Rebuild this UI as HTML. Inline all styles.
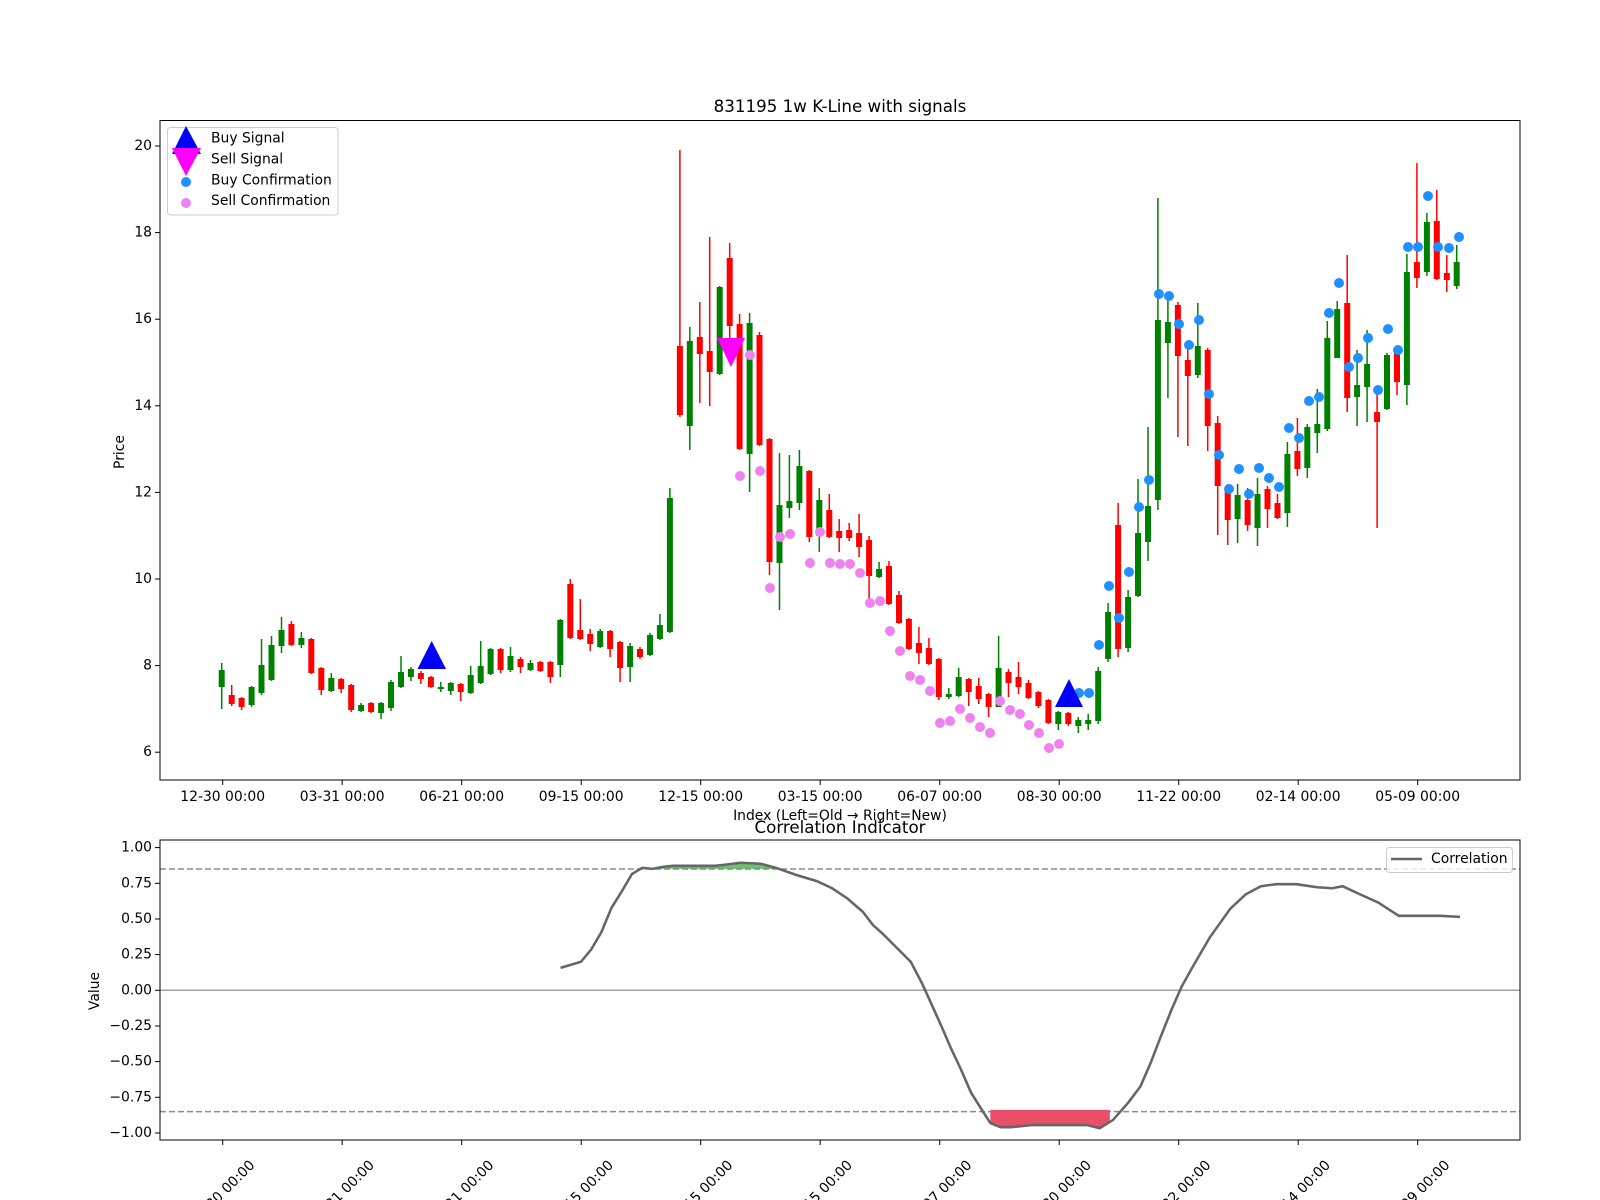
<!DOCTYPE html>
<html><head><meta charset="utf-8"><style>
html,body{margin:0;padding:0;background:#fff;}
svg{display:block;font-family:"DejaVu Sans","Liberation Sans",sans-serif;}
.g{fill:#008000;} .r{fill:#ff0000;}
.gw{stroke:#008000;stroke-width:1.5;} .rw{stroke:#ff0000;stroke-width:1.5;}
.bd{fill:#1e90ff;} .vd{fill:#ee82ee;}
text{fill:#000;font-size:13.9px;}
</style></head><body>
<svg width="1600" height="1200" viewBox="0 0 1600 1200" xmlns="http://www.w3.org/2000/svg">
<rect width="1600" height="1200" fill="#fff"/>
<text x="840" y="112" text-anchor="middle" style="font-size:16.7px">831195 1w K-Line with signals</text>

<!-- top axes ticks -->
<g stroke="#000" stroke-width="1">
<line x1="155" x2="160" y1="146" y2="146"/><line x1="155" x2="160" y1="232.6" y2="232.6"/><line x1="155" x2="160" y1="319.2" y2="319.2"/><line x1="155" x2="160" y1="405.8" y2="405.8"/><line x1="155" x2="160" y1="492.4" y2="492.4"/><line x1="155" x2="160" y1="579" y2="579"/><line x1="155" x2="160" y1="665.6" y2="665.6"/><line x1="155" x2="160" y1="752.2" y2="752.2"/>
<line x1="222.7" x2="222.7" y1="780" y2="785"/><line x1="342.2" x2="342.2" y1="780" y2="785"/><line x1="461.7" x2="461.7" y1="780" y2="785"/><line x1="581.2" x2="581.2" y1="780" y2="785"/><line x1="700.7" x2="700.7" y1="780" y2="785"/><line x1="820.2" x2="820.2" y1="780" y2="785"/><line x1="939.7" x2="939.7" y1="780" y2="785"/><line x1="1059.2" x2="1059.2" y1="780" y2="785"/><line x1="1178.7" x2="1178.7" y1="780" y2="785"/><line x1="1298.2" x2="1298.2" y1="780" y2="785"/><line x1="1417.7" x2="1417.7" y1="780" y2="785"/>
</g>
<g text-anchor="end" dominant-baseline="central">
<text x="152" y="146">20</text><text x="152" y="232.6">18</text><text x="152" y="319.2">16</text><text x="152" y="405.8">14</text><text x="152" y="492.4">12</text><text x="152" y="579">10</text><text x="152" y="665.6">8</text><text x="152" y="752.2">6</text>
</g>
<g text-anchor="middle">
<text x="222.7" y="801">12-30 00:00</text><text x="342.2" y="801">03-31 00:00</text><text x="461.7" y="801">06-21 00:00</text><text x="581.2" y="801">09-15 00:00</text><text x="700.7" y="801">12-15 00:00</text><text x="820.2" y="801">03-15 00:00</text><text x="939.7" y="801">06-07 00:00</text><text x="1059.2" y="801">08-30 00:00</text><text x="1178.7" y="801">11-22 00:00</text><text x="1298.2" y="801">02-14 00:00</text><text x="1417.7" y="801">05-09 00:00</text>
</g>
<text x="840" y="820" text-anchor="middle">Index (Left=Old → Right=New)</text>
<text transform="translate(124,452) rotate(-90)" text-anchor="middle">Price</text>

<!-- candles -->
<g>
<line class="gw" x1="221.7" x2="221.7" y1="663" y2="709"/><rect class="g" x="218.7" y="670" width="6" height="17"/>
<line class="rw" x1="231.7" x2="231.7" y1="685" y2="706"/><rect class="r" x="228.7" y="695" width="6" height="9"/>
<line class="rw" x1="241.6" x2="241.6" y1="697" y2="710"/><rect class="r" x="238.6" y="698" width="6" height="9"/>
<line class="gw" x1="251.6" x2="251.6" y1="686" y2="707"/><rect class="g" x="248.6" y="687" width="6" height="18"/>
<line class="gw" x1="261.5" x2="261.5" y1="639" y2="695"/><rect class="g" x="258.5" y="665" width="6" height="28"/>
<line class="gw" x1="271.5" x2="271.5" y1="636" y2="681"/><rect class="g" x="268.5" y="645" width="6" height="35"/>
<line class="gw" x1="281.5" x2="281.5" y1="617" y2="653"/><rect class="g" x="278.5" y="630" width="6" height="16"/>
<line class="rw" x1="291.4" x2="291.4" y1="621" y2="646"/><rect class="r" x="288.4" y="624" width="6" height="21"/>
<line class="gw" x1="301.4" x2="301.4" y1="632" y2="648"/><rect class="g" x="298.4" y="638" width="6" height="7"/>
<line class="rw" x1="311.3" x2="311.3" y1="638" y2="674"/><rect class="r" x="308.3" y="639" width="6" height="34"/>
<line class="rw" x1="321.3" x2="321.3" y1="667" y2="695"/><rect class="r" x="318.3" y="668" width="6" height="22"/>
<line class="gw" x1="331.3" x2="331.3" y1="673" y2="692"/><rect class="g" x="328.3" y="678" width="6" height="13"/>
<line class="rw" x1="341.2" x2="341.2" y1="678" y2="693"/><rect class="r" x="338.2" y="679" width="6" height="10"/>
<line class="rw" x1="351.2" x2="351.2" y1="684" y2="712"/><rect class="r" x="348.2" y="685" width="6" height="25"/>
<line class="gw" x1="361.1" x2="361.1" y1="703" y2="712"/><rect class="g" x="358.1" y="705" width="6" height="6"/>
<line class="rw" x1="371.1" x2="371.1" y1="702" y2="713"/><rect class="r" x="368.1" y="703" width="6" height="9"/>
<line class="gw" x1="381.1" x2="381.1" y1="702" y2="719"/><rect class="g" x="378.1" y="703" width="6" height="10"/>
<line class="gw" x1="391" x2="391" y1="680" y2="711"/><rect class="g" x="388" y="682" width="6" height="26"/>
<line class="gw" x1="401" x2="401" y1="656" y2="688"/><rect class="g" x="398" y="672" width="6" height="15"/>
<line class="gw" x1="410.9" x2="410.9" y1="667" y2="681"/><rect class="g" x="407.9" y="669" width="6" height="8"/>
<line class="rw" x1="420.9" x2="420.9" y1="671" y2="684"/><rect class="r" x="417.9" y="673" width="6" height="6"/>
<line class="rw" x1="430.9" x2="430.9" y1="676" y2="688"/><rect class="r" x="427.9" y="677" width="6" height="10"/>
<line class="gw" x1="440.8" x2="440.8" y1="682" y2="692"/><rect class="g" x="437.8" y="687" width="6" height="2"/>
<line class="gw" x1="450.8" x2="450.8" y1="682" y2="695"/><rect class="g" x="447.8" y="683" width="6" height="8"/>
<line class="rw" x1="460.7" x2="460.7" y1="683" y2="701"/><rect class="r" x="457.7" y="684" width="6" height="8"/>
<line class="gw" x1="470.7" x2="470.7" y1="666" y2="694"/><rect class="g" x="467.7" y="675" width="6" height="18"/>
<line class="gw" x1="480.7" x2="480.7" y1="641" y2="684"/><rect class="g" x="477.7" y="666" width="6" height="17"/>
<line class="gw" x1="490.6" x2="490.6" y1="648" y2="675"/><rect class="g" x="487.6" y="649" width="6" height="25"/>
<line class="rw" x1="500.6" x2="500.6" y1="648" y2="673"/><rect class="r" x="497.6" y="649" width="6" height="21"/>
<line class="gw" x1="510.5" x2="510.5" y1="647" y2="672"/><rect class="g" x="507.5" y="656" width="6" height="14"/>
<line class="rw" x1="520.5" x2="520.5" y1="657" y2="673"/><rect class="r" x="517.5" y="659" width="6" height="8"/>
<line class="gw" x1="530.5" x2="530.5" y1="660" y2="671"/><rect class="g" x="527.5" y="663" width="6" height="7"/>
<line class="rw" x1="540.4" x2="540.4" y1="661" y2="672"/><rect class="r" x="537.4" y="662" width="6" height="9"/>
<line class="rw" x1="550.4" x2="550.4" y1="661" y2="683"/><rect class="r" x="547.4" y="662" width="6" height="15"/>
<line class="gw" x1="560.3" x2="560.3" y1="619" y2="677"/><rect class="g" x="557.3" y="620" width="6" height="45"/>
<line class="rw" x1="570.3" x2="570.3" y1="579" y2="639"/><rect class="r" x="567.3" y="584" width="6" height="54"/>
<line class="rw" x1="580.3" x2="580.3" y1="599" y2="640"/><rect class="r" x="577.3" y="630" width="6" height="9"/>
<line class="rw" x1="590.2" x2="590.2" y1="629" y2="651"/><rect class="r" x="587.2" y="634" width="6" height="10"/>
<line class="gw" x1="600.2" x2="600.2" y1="629" y2="648"/><rect class="g" x="597.2" y="631" width="6" height="16"/>
<line class="rw" x1="610.1" x2="610.1" y1="630" y2="657"/><rect class="r" x="607.1" y="631" width="6" height="18"/>
<line class="rw" x1="620.1" x2="620.1" y1="641" y2="682"/><rect class="r" x="617.1" y="642" width="6" height="26"/>
<line class="gw" x1="630.1" x2="630.1" y1="643" y2="682"/><rect class="g" x="627.1" y="646" width="6" height="21"/>
<line class="rw" x1="640" x2="640" y1="647" y2="659"/><rect class="r" x="637" y="649" width="6" height="8"/>
<line class="gw" x1="650" x2="650" y1="633" y2="656"/><rect class="g" x="647" y="635" width="6" height="20"/>
<line class="gw" x1="659.9" x2="659.9" y1="614" y2="640"/><rect class="g" x="656.9" y="625" width="6" height="14"/>
<line class="gw" x1="669.9" x2="669.9" y1="488" y2="633"/><rect class="g" x="666.9" y="498" width="6" height="134"/>
<line class="rw" x1="679.9" x2="679.9" y1="150" y2="417"/><rect class="r" x="676.9" y="346" width="6" height="69"/>
<line class="gw" x1="689.8" x2="689.8" y1="327" y2="450"/><rect class="g" x="686.8" y="341" width="6" height="85"/>
<line class="rw" x1="699.8" x2="699.8" y1="302" y2="403"/><rect class="r" x="696.8" y="337" width="6" height="17"/>
<line class="rw" x1="709.7" x2="709.7" y1="237" y2="406"/><rect class="r" x="706.7" y="351" width="6" height="21"/>
<line class="gw" x1="719.7" x2="719.7" y1="286" y2="375"/><rect class="g" x="716.7" y="287" width="6" height="87"/>
<line class="rw" x1="729.7" x2="729.7" y1="243" y2="338"/><rect class="r" x="726.7" y="258" width="6" height="68"/>
<line class="rw" x1="739.6" x2="739.6" y1="314" y2="450"/><rect class="r" x="736.6" y="324" width="6" height="125"/>
<line class="gw" x1="749.6" x2="749.6" y1="313" y2="492"/><rect class="g" x="746.6" y="323" width="6" height="131"/>
<line class="rw" x1="759.5" x2="759.5" y1="332" y2="446"/><rect class="r" x="756.5" y="335" width="6" height="110"/>
<line class="rw" x1="769.5" x2="769.5" y1="438" y2="575"/><rect class="r" x="766.5" y="439" width="6" height="123"/>
<line class="gw" x1="779.5" x2="779.5" y1="453" y2="610"/><rect class="g" x="776.5" y="505" width="6" height="58"/>
<line class="gw" x1="789.4" x2="789.4" y1="455" y2="518"/><rect class="g" x="786.4" y="501" width="6" height="7"/>
<line class="gw" x1="799.4" x2="799.4" y1="450" y2="510"/><rect class="g" x="796.4" y="466" width="6" height="37"/>
<line class="rw" x1="809.3" x2="809.3" y1="470" y2="542"/><rect class="r" x="806.3" y="471" width="6" height="66"/>
<line class="gw" x1="819.3" x2="819.3" y1="488" y2="552"/><rect class="g" x="816.3" y="500" width="6" height="36"/>
<line class="rw" x1="829.3" x2="829.3" y1="494" y2="538"/><rect class="r" x="826.3" y="510" width="6" height="27"/>
<line class="rw" x1="839.2" x2="839.2" y1="519" y2="552"/><rect class="r" x="836.2" y="531" width="6" height="7"/>
<line class="rw" x1="849.2" x2="849.2" y1="523" y2="541"/><rect class="r" x="846.2" y="530" width="6" height="8"/>
<line class="rw" x1="859.1" x2="859.1" y1="514" y2="557"/><rect class="r" x="856.1" y="533" width="6" height="14"/>
<line class="rw" x1="869.1" x2="869.1" y1="536" y2="600"/><rect class="r" x="866.1" y="540" width="6" height="36"/>
<line class="gw" x1="879.1" x2="879.1" y1="562" y2="578"/><rect class="g" x="876.1" y="569" width="6" height="8"/>
<line class="rw" x1="889" x2="889" y1="561" y2="605"/><rect class="r" x="886" y="566" width="6" height="38"/>
<line class="rw" x1="899" x2="899" y1="591" y2="624"/><rect class="r" x="896" y="595" width="6" height="28"/>
<line class="rw" x1="908.9" x2="908.9" y1="618" y2="650"/><rect class="r" x="905.9" y="619" width="6" height="30"/>
<line class="rw" x1="918.9" x2="918.9" y1="627" y2="664"/><rect class="r" x="915.9" y="643" width="6" height="10"/>
<line class="rw" x1="928.9" x2="928.9" y1="638" y2="665"/><rect class="r" x="925.9" y="648" width="6" height="16"/>
<line class="rw" x1="938.8" x2="938.8" y1="658" y2="700"/><rect class="r" x="935.8" y="659" width="6" height="38"/>
<line class="gw" x1="948.8" x2="948.8" y1="688" y2="699"/><rect class="g" x="945.8" y="694" width="6" height="3"/>
<line class="gw" x1="958.7" x2="958.7" y1="668" y2="697"/><rect class="g" x="955.7" y="677" width="6" height="19"/>
<line class="rw" x1="968.7" x2="968.7" y1="678" y2="706"/><rect class="r" x="965.7" y="679" width="6" height="13"/>
<line class="rw" x1="978.7" x2="978.7" y1="678" y2="704"/><rect class="r" x="975.7" y="686" width="6" height="13"/>
<line class="rw" x1="988.6" x2="988.6" y1="693" y2="717"/><rect class="r" x="985.6" y="694" width="6" height="13"/>
<line class="gw" x1="998.6" x2="998.6" y1="636" y2="707"/><rect class="g" x="995.6" y="668" width="6" height="39"/>
<line class="rw" x1="1008.5" x2="1008.5" y1="669" y2="697"/><rect class="r" x="1005.5" y="672" width="6" height="11"/>
<line class="rw" x1="1018.5" x2="1018.5" y1="662" y2="694"/><rect class="r" x="1015.5" y="677" width="6" height="10"/>
<line class="rw" x1="1028.5" x2="1028.5" y1="680" y2="699"/><rect class="r" x="1025.5" y="683" width="6" height="15"/>
<line class="rw" x1="1038.4" x2="1038.4" y1="691" y2="708"/><rect class="r" x="1035.4" y="692" width="6" height="14"/>
<line class="rw" x1="1048.4" x2="1048.4" y1="699" y2="724"/><rect class="r" x="1045.4" y="700" width="6" height="23"/>
<line class="gw" x1="1058.3" x2="1058.3" y1="711" y2="730"/><rect class="g" x="1055.3" y="712" width="6" height="12"/>
<line class="rw" x1="1068.3" x2="1068.3" y1="712" y2="726"/><rect class="r" x="1065.3" y="713" width="6" height="11"/>
<line class="gw" x1="1078.3" x2="1078.3" y1="717" y2="733"/><rect class="g" x="1075.3" y="720" width="6" height="6"/>
<line class="gw" x1="1088.2" x2="1088.2" y1="714" y2="730"/><rect class="g" x="1085.2" y="720" width="6" height="4"/>
<line class="gw" x1="1098.2" x2="1098.2" y1="667" y2="724"/><rect class="g" x="1095.2" y="671" width="6" height="50"/>
<line class="gw" x1="1108.1" x2="1108.1" y1="603" y2="662"/><rect class="g" x="1105.1" y="612" width="6" height="47"/>
<line class="rw" x1="1118.1" x2="1118.1" y1="503" y2="657"/><rect class="r" x="1115.1" y="525" width="6" height="124"/>
<line class="gw" x1="1128.1" x2="1128.1" y1="590" y2="652"/><rect class="g" x="1125.1" y="597" width="6" height="51"/>
<line class="gw" x1="1138" x2="1138" y1="479" y2="597"/><rect class="g" x="1135" y="533" width="6" height="63"/>
<line class="gw" x1="1148" x2="1148" y1="427" y2="561"/><rect class="g" x="1145" y="506" width="6" height="36"/>
<line class="gw" x1="1157.9" x2="1157.9" y1="198" y2="510"/><rect class="g" x="1154.9" y="320" width="6" height="180"/>
<line class="gw" x1="1167.9" x2="1167.9" y1="297" y2="398"/><rect class="g" x="1164.9" y="322" width="6" height="21"/>
<line class="rw" x1="1177.9" x2="1177.9" y1="302" y2="437"/><rect class="r" x="1174.9" y="305" width="6" height="51"/>
<line class="rw" x1="1187.8" x2="1187.8" y1="345" y2="446"/><rect class="r" x="1184.8" y="360" width="6" height="16"/>
<line class="gw" x1="1197.8" x2="1197.8" y1="303" y2="378"/><rect class="g" x="1194.8" y="346" width="6" height="29"/>
<line class="rw" x1="1207.7" x2="1207.7" y1="348" y2="451"/><rect class="r" x="1204.7" y="350" width="6" height="76"/>
<line class="rw" x1="1217.7" x2="1217.7" y1="416" y2="535"/><rect class="r" x="1214.7" y="423" width="6" height="63"/>
<line class="rw" x1="1227.7" x2="1227.7" y1="484" y2="545"/><rect class="r" x="1224.7" y="488" width="6" height="32"/>
<line class="gw" x1="1237.6" x2="1237.6" y1="484" y2="543"/><rect class="g" x="1234.6" y="495" width="6" height="24"/>
<line class="rw" x1="1247.6" x2="1247.6" y1="488" y2="531"/><rect class="r" x="1244.6" y="500" width="6" height="25"/>
<line class="gw" x1="1257.5" x2="1257.5" y1="478" y2="546"/><rect class="g" x="1254.5" y="494" width="6" height="34"/>
<line class="rw" x1="1267.5" x2="1267.5" y1="486" y2="528"/><rect class="r" x="1264.5" y="489" width="6" height="20"/>
<line class="rw" x1="1277.5" x2="1277.5" y1="494" y2="519"/><rect class="r" x="1274.5" y="503" width="6" height="15"/>
<line class="gw" x1="1287.4" x2="1287.4" y1="442" y2="527"/><rect class="g" x="1284.4" y="454" width="6" height="59"/>
<line class="rw" x1="1297.4" x2="1297.4" y1="418" y2="476"/><rect class="r" x="1294.4" y="451" width="6" height="18"/>
<line class="gw" x1="1307.3" x2="1307.3" y1="424" y2="478"/><rect class="g" x="1304.3" y="427" width="6" height="41"/>
<line class="gw" x1="1317.3" x2="1317.3" y1="389" y2="453"/><rect class="g" x="1314.3" y="424" width="6" height="9"/>
<line class="gw" x1="1327.3" x2="1327.3" y1="321" y2="431"/><rect class="g" x="1324.3" y="338" width="6" height="91"/>
<line class="gw" x1="1337.2" x2="1337.2" y1="301" y2="358"/><rect class="g" x="1334.2" y="309" width="6" height="49"/>
<line class="rw" x1="1347.2" x2="1347.2" y1="255" y2="412"/><rect class="r" x="1344.2" y="303" width="6" height="95"/>
<line class="gw" x1="1357.1" x2="1357.1" y1="350" y2="426"/><rect class="g" x="1354.1" y="385" width="6" height="12"/>
<line class="gw" x1="1367.1" x2="1367.1" y1="330" y2="422"/><rect class="g" x="1364.1" y="364" width="6" height="23"/>
<line class="rw" x1="1377.1" x2="1377.1" y1="386" y2="528"/><rect class="r" x="1374.1" y="412" width="6" height="10"/>
<line class="gw" x1="1387" x2="1387" y1="353" y2="410"/><rect class="g" x="1384" y="355" width="6" height="54"/>
<line class="rw" x1="1397" x2="1397" y1="349" y2="395"/><rect class="r" x="1394" y="353" width="6" height="29"/>
<line class="gw" x1="1406.9" x2="1406.9" y1="254" y2="405"/><rect class="g" x="1403.9" y="272" width="6" height="113"/>
<line class="rw" x1="1416.9" x2="1416.9" y1="163" y2="288"/><rect class="r" x="1413.9" y="262" width="6" height="16"/>
<line class="gw" x1="1426.9" x2="1426.9" y1="213" y2="276"/><rect class="g" x="1423.9" y="222" width="6" height="50"/>
<line class="rw" x1="1436.8" x2="1436.8" y1="190" y2="280"/><rect class="r" x="1433.8" y="221" width="6" height="58"/>
<line class="rw" x1="1446.8" x2="1446.8" y1="255" y2="292"/><rect class="r" x="1443.8" y="273" width="6" height="7"/>
<line class="gw" x1="1456.7" x2="1456.7" y1="245" y2="289"/><rect class="g" x="1453.7" y="262" width="6" height="24"/>
</g>

<!-- sell confirmations -->
<g class="vd">
<circle cx="750" cy="355" r="5"/><circle cx="740" cy="476" r="5"/><circle cx="760" cy="471" r="5"/><circle cx="770" cy="588" r="5"/><circle cx="780" cy="537" r="5"/><circle cx="790" cy="534" r="5"/><circle cx="810" cy="563" r="5"/><circle cx="820" cy="532" r="5"/><circle cx="830" cy="563" r="5"/><circle cx="840" cy="564" r="5"/><circle cx="850" cy="564" r="5"/><circle cx="860" cy="573" r="5"/><circle cx="870" cy="603" r="5"/><circle cx="880" cy="601" r="5"/><circle cx="890" cy="631" r="5"/><circle cx="900" cy="651" r="5"/><circle cx="910" cy="676" r="5"/><circle cx="920" cy="680" r="5"/><circle cx="930" cy="691" r="5"/><circle cx="940" cy="723" r="5"/><circle cx="950" cy="721" r="5"/><circle cx="960" cy="709" r="5"/><circle cx="970" cy="718" r="5"/><circle cx="980" cy="727" r="5"/><circle cx="990" cy="733" r="5"/><circle cx="1000" cy="701" r="5"/><circle cx="1010" cy="710" r="5"/><circle cx="1020" cy="714" r="5"/><circle cx="1029" cy="725" r="5"/><circle cx="1039" cy="733" r="5"/><circle cx="1049" cy="748" r="5"/><circle cx="1059" cy="744" r="5"/>
</g>
<!-- buy confirmations -->
<g class="bd">
<circle cx="1079" cy="693" r="5"/><circle cx="1089" cy="693" r="5"/><circle cx="1099" cy="645" r="5"/><circle cx="1109" cy="586" r="5"/><circle cx="1119" cy="618" r="5"/><circle cx="1129" cy="572" r="5"/><circle cx="1139" cy="507" r="5"/><circle cx="1149" cy="480" r="5"/><circle cx="1159" cy="294" r="5"/><circle cx="1169" cy="296" r="5"/><circle cx="1179" cy="324" r="5"/><circle cx="1189" cy="345" r="5"/><circle cx="1199" cy="320" r="5"/><circle cx="1209" cy="394" r="5"/><circle cx="1219" cy="455" r="5"/><circle cx="1229" cy="489" r="5"/><circle cx="1239" cy="469" r="5"/><circle cx="1249" cy="494" r="5"/><circle cx="1259" cy="468" r="5"/><circle cx="1269" cy="478" r="5"/><circle cx="1279" cy="487" r="5"/><circle cx="1289" cy="428" r="5"/><circle cx="1299" cy="438" r="5"/><circle cx="1309" cy="401" r="5"/><circle cx="1319" cy="397" r="5"/><circle cx="1329" cy="313" r="5"/><circle cx="1339" cy="283" r="5"/><circle cx="1349" cy="367" r="5"/><circle cx="1358" cy="358" r="5"/><circle cx="1368" cy="338" r="5"/><circle cx="1378" cy="390" r="5"/><circle cx="1388" cy="329" r="5"/><circle cx="1398" cy="350" r="5"/><circle cx="1408" cy="247" r="5"/><circle cx="1418" cy="247" r="5"/><circle cx="1428" cy="196" r="5"/><circle cx="1438" cy="247" r="5"/><circle cx="1449" cy="248" r="5"/><circle cx="1459" cy="237" r="5"/>
</g>
<!-- signals -->
<polygon points="431.7,641 417.5,669 446,669" fill="#0000ff"/>
<polygon points="1069,679 1055,707 1083,707" fill="#0000ff"/>
<polygon points="717,338 745,338 731,367" fill="#ff00ff"/>

<!-- top frame -->
<rect x="160" y="120.5" width="1360" height="659.5" fill="none" stroke="#000" stroke-width="1"/>

<!-- legend top -->
<rect x="167.5" y="127.5" width="170.5" height="87.5" rx="3" fill="#fff" fill-opacity="0.8" stroke="#ccc"/>
<polygon points="186,126 172,154 201,154" fill="#0000ff"/>
<polygon points="172,148 201,148 186,176" fill="#ff00ff"/>
<circle cx="186" cy="182" r="5" class="bd"/>
<circle cx="186" cy="203" r="5" class="vd"/>
<g dominant-baseline="central">
<text x="211" y="138.5">Buy Signal</text><text x="211" y="159.5">Sell Signal</text><text x="211" y="180.5">Buy Confirmation</text><text x="211" y="201">Sell Confirmation</text>
</g>

<!-- bottom axes -->
<text x="840" y="833" text-anchor="middle" style="font-size:16.7px">Correlation Indicator</text>
<line x1="160" x2="1520" y1="990.3" y2="990.3" stroke="#a0a0a0" stroke-width="1.5"/>
<line x1="160" x2="1520" y1="869" y2="869" stroke="#8c8c8c" stroke-width="1.5" stroke-dasharray="6,3"/>
<line x1="160" x2="1520" y1="1111.6" y2="1111.6" stroke="#8c8c8c" stroke-width="1.5" stroke-dasharray="6,3"/>
<g transform="scale(1.021)">
<polygon points="629,850 639,851 649,849 659,848 700,848 710,847 725,845 745,846 760,850 760,851 629,851" fill="#4caf50" fill-opacity="0.8"/>
<polygon points="970,1087 970,1100 980,1104 990,1104 1010,1102 1030,1102 1065,1102 1077,1105 1087,1099 1087,1087" fill="#e8506a"/>
<polyline fill="none" stroke="#666" stroke-width="2.5" points="549,948 569,942 579,930 589,913 599,889 609,873 619,856 629,850 639,851 649,849 659,848 700,848 710,847 725,845 745,846 760,850 780,857 800,863 815,870 830,880 845,893 855,906 865,915 880,930 892,942 903,963 913,985 922,1005 932,1028 941,1047 951,1070 961,1086 970,1100 980,1104 990,1104 1010,1102 1030,1102 1065,1102 1077,1105 1090,1097 1105,1080 1117,1064 1127,1041 1137,1015 1147,990 1157,967 1167,949 1185,918 1205,890 1220,876 1235,868 1250,866 1270,866 1290,869 1305,870 1315,868 1330,875 1350,884 1370,897 1380,897 1410,897 1430,898"/>
</g>
<rect x="160" y="840" width="1360" height="300" fill="none" stroke="#000" stroke-width="1"/>
<g stroke="#000" stroke-width="1">
<line x1="155" x2="160" y1="847.6" y2="847.6"/><line x1="155" x2="160" y1="883.3" y2="883.3"/><line x1="155" x2="160" y1="919" y2="919"/><line x1="155" x2="160" y1="954.6" y2="954.6"/><line x1="155" x2="160" y1="990.3" y2="990.3"/><line x1="155" x2="160" y1="1026" y2="1026"/><line x1="155" x2="160" y1="1061.6" y2="1061.6"/><line x1="155" x2="160" y1="1097.3" y2="1097.3"/><line x1="155" x2="160" y1="1133" y2="1133"/>
<line x1="222.7" x2="222.7" y1="1140" y2="1145"/><line x1="342.2" x2="342.2" y1="1140" y2="1145"/><line x1="461.7" x2="461.7" y1="1140" y2="1145"/><line x1="581.2" x2="581.2" y1="1140" y2="1145"/><line x1="700.7" x2="700.7" y1="1140" y2="1145"/><line x1="820.2" x2="820.2" y1="1140" y2="1145"/><line x1="939.7" x2="939.7" y1="1140" y2="1145"/><line x1="1059.2" x2="1059.2" y1="1140" y2="1145"/><line x1="1178.7" x2="1178.7" y1="1140" y2="1145"/><line x1="1298.2" x2="1298.2" y1="1140" y2="1145"/><line x1="1417.7" x2="1417.7" y1="1140" y2="1145"/>
</g>
<g text-anchor="end" dominant-baseline="central">
<text x="152" y="847.6">1.00</text><text x="152" y="883.3">0.75</text><text x="152" y="919">0.50</text><text x="152" y="954.6">0.25</text><text x="152" y="990.3">0.00</text><text x="152" y="1026">−0.25</text><text x="152" y="1061.6">−0.50</text><text x="152" y="1097.3">−0.75</text><text x="152" y="1133">−1.00</text>
</g>
<text transform="translate(99,991) rotate(-90)" text-anchor="middle">Value</text>
<g text-anchor="middle" dominant-baseline="central">
<text transform="translate(222.7,1193) rotate(-45)">12-30 00:00</text>
<text transform="translate(342.2,1193) rotate(-45)">03-31 00:00</text>
<text transform="translate(461.7,1193) rotate(-45)">06-21 00:00</text>
<text transform="translate(581.2,1193) rotate(-45)">09-15 00:00</text>
<text transform="translate(700.7,1193) rotate(-45)">12-15 00:00</text>
<text transform="translate(820.2,1193) rotate(-45)">03-15 00:00</text>
<text transform="translate(939.7,1193) rotate(-45)">06-07 00:00</text>
<text transform="translate(1059.2,1193) rotate(-45)">08-30 00:00</text>
<text transform="translate(1178.7,1193) rotate(-45)">11-22 00:00</text>
<text transform="translate(1298.2,1193) rotate(-45)">02-14 00:00</text>
<text transform="translate(1417.7,1193) rotate(-45)">05-09 00:00</text>
</g>
<!-- bottom legend -->
<rect x="1386.5" y="847.5" width="126" height="25" rx="3" fill="#fff" fill-opacity="0.8" stroke="#ccc"/>
<line x1="1391" x2="1422" y1="859" y2="859" stroke="#666" stroke-width="2.5"/>
<text x="1431" y="859" dominant-baseline="central">Correlation</text>
</svg>
</body></html>
